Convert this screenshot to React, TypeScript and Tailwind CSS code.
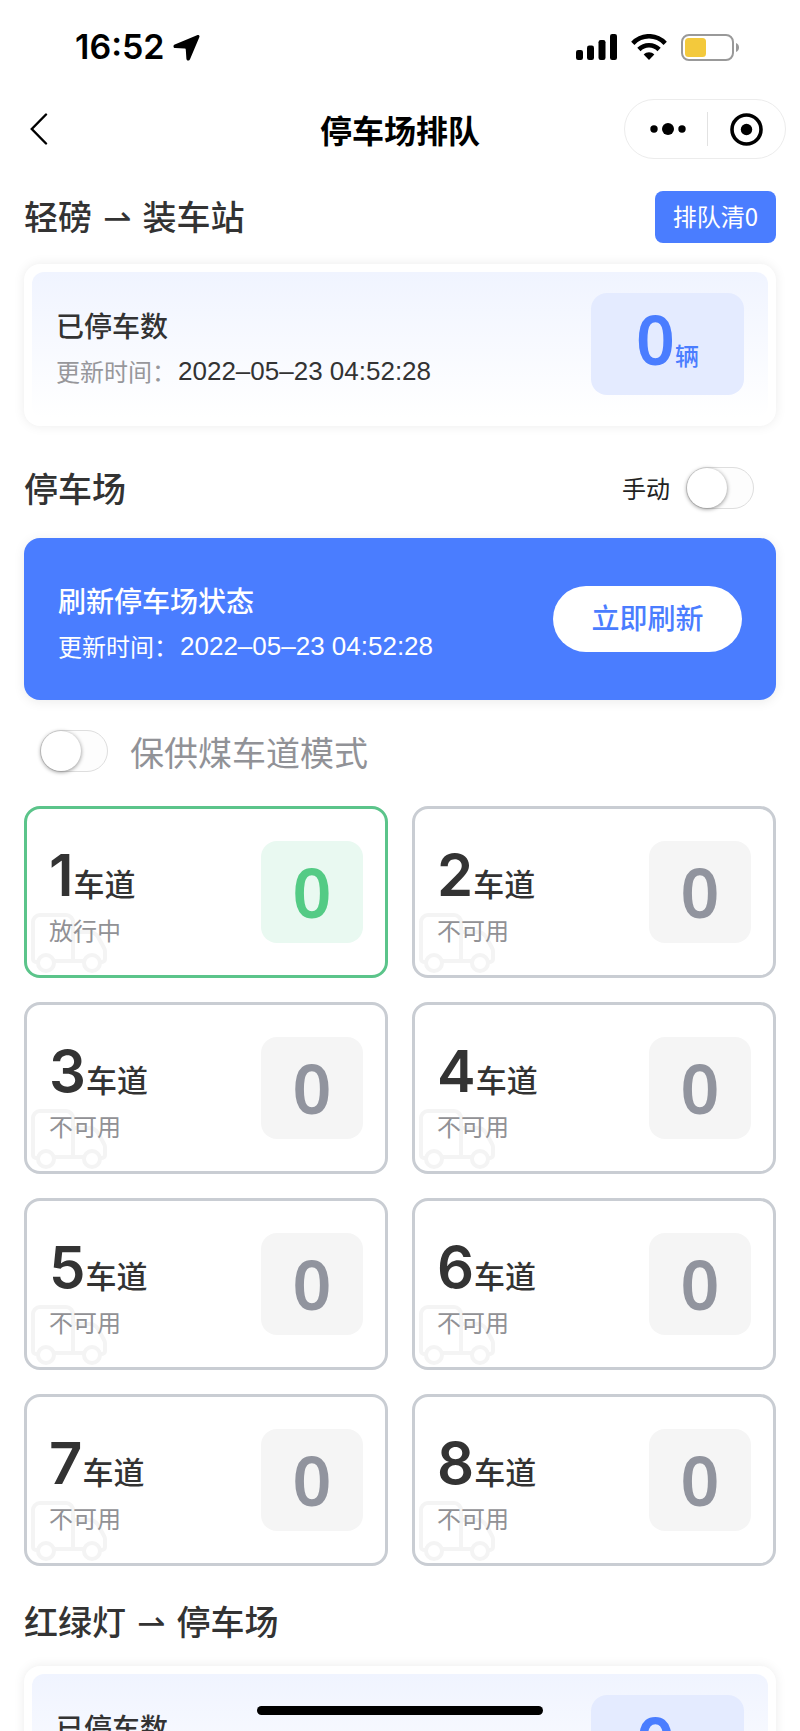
import { useState } from 'react';
import type { ReactNode } from 'react';

const UPDATED_AT = '2022–05–23 04:52:28';

const lanes = [
  { id: 1, status: '放行中', count: 0, open: true },
  { id: 2, status: '不可用', count: 0, open: false },
  { id: 3, status: '不可用', count: 0, open: false },
  { id: 4, status: '不可用', count: 0, open: false },
  { id: 5, status: '不可用', count: 0, open: false },
  { id: 6, status: '不可用', count: 0, open: false },
  { id: 7, status: '不可用', count: 0, open: false },
  { id: 8, status: '不可用', count: 0, open: false },
];

function StatusBar() {
  return (
    <div className="flex h-[94px] shrink-0 items-center justify-between pr-[60px] pl-[75px] text-black">
      <div className="flex items-center gap-2">
        <span className="font-['Inter',sans-serif] text-[34px] leading-none font-semibold">16:52</span>
        <svg className="h-[27px] w-[27px]" viewBox="0 0 27 27" fill="currentColor">
          <path d="M24 1.200 1.800 10.600c-2 .9-1.600 3.400.5 3.500l9.300.5c.8 0 1.100.4 1.200 1.100l.6 9c.2 2.200 2.800 2.600 3.600.6L26.300 3.300C27 1.500 25.700.4 24 1.200Z" />
        </svg>
      </div>
      <div className="flex items-center">
        <svg className="h-[26px] w-[41px]" viewBox="0 0 41 26" fill="currentColor">
          <rect x="0" y="16" width="7" height="10" rx="2.200" />
          <rect x="11" y="11.500" width="7" height="14.500" rx="2.200" />
          <rect x="22.500" y="6" width="7" height="20" rx="2.200" />
          <rect x="34" y="0" width="7" height="26" rx="2.200" />
        </svg>
        <svg className="ml-[14px] h-[26px] w-[36px]" viewBox="0 0 36 26" fill="none" stroke="currentColor" strokeWidth="4.600">
          <path d="M1.800 9.300C11-.1 25-.1 34.200 9.300" />
          <path d="M7.900 15.500c5.700-5.700 14.500-5.700 20.200 0" />
          <path d="M12.700 20.500c3-2.900 7.600-2.900 10.600 0L18 26Z" fill="currentColor" stroke="none" />
        </svg>
        <svg className="ml-[14px] h-[27px] w-[59px]" viewBox="0 0 59 27">
          <rect x="1" y="1" width="51" height="25" rx="7" fill="none" stroke="#999" strokeWidth="2" />
          <rect x="4" y="4" width="21" height="19" rx="3.500" fill="#f3c93c" />
          <path d="M55 9c4 1.500 4 7.500 0 9Z" fill="#999" />
        </svg>
      </div>
    </div>
  );
}

function NavBar() {
  return (
    <header className="grid h-[70px] shrink-0 grid-cols-[1fr_auto_1fr] items-center px-[14px] text-black">
      <button type="button" aria-label="返回" className="w-fit pl-4">
        <svg className="h-8 w-[18px]" viewBox="0 0 18 32" fill="none" stroke="currentColor" strokeWidth="2.400" strokeLinecap="round">
          <path d="M16 1.500 1.800 16 16 30.500" />
        </svg>
      </button>
      <h1 className="text-[32px] leading-10 font-bold">停车场排队</h1>
      <div className="flex h-[60px] w-[162px] items-center justify-self-end rounded-full border border-[#ececec] bg-white pl-1">
        <button type="button" aria-label="更多" className="flex flex-1 justify-center">
          <svg className="h-3 w-9" viewBox="0 0 36 12" fill="currentColor">
            <circle cx="4" cy="6" r="3.700" />
            <circle cx="18" cy="6" r="6" />
            <circle cx="32" cy="6" r="3.700" />
          </svg>
        </button>
        <span className="h-[34px] w-px bg-[#e2e2e2]" />
        <button type="button" aria-label="关闭" className="flex flex-1 justify-center">
          <svg className="h-[33px] w-[33px]" viewBox="0 0 33 33">
            <circle cx="16.500" cy="16.500" r="14.500" fill="none" stroke="currentColor" strokeWidth="3.600" />
            <circle cx="16.500" cy="16.500" r="5.700" fill="currentColor" />
          </svg>
        </button>
      </div>
    </header>
  );
}

function Heading({ children }: { children: ReactNode }) {
  return <h2 className="text-[34px] leading-10 font-medium text-[#333]">{children}</h2>;
}

function Arrow() {
  return <span className="mx-[11px] font-['DejaVu_Sans',sans-serif] font-normal">⇀</span>;
}

function Switch({ id }: { id: string }) {
  const [on, setOn] = useState(false);
  return (
    <input
      id={id}
      type="checkbox"
      role="switch"
      checked={on}
      onChange={(e) => setOn(e.target.checked)}
      className="h-[42px] w-[68px] shrink-0 appearance-none rounded-full border border-[#dedede] bg-[#fdfdfd] before:block before:h-[40px] before:w-[40px] before:rounded-full before:bg-white before:shadow-[0_1px_4px_rgba(0,0,0,0.45)] checked:bg-[#4a7dff] checked:before:translate-x-[26px]"
    />
  );
}

function UpdatedAt({ labelClass, valueClass }: { labelClass: string; valueClass: string }) {
  return (
    <p className="mt-2 flex items-center gap-0.5 leading-9">
      <span className={`text-2xl leading-9 ${labelClass}`}>更新时间：</span>
      <time className={`font-['Liberation_Sans',sans-serif] text-[26px] leading-9 ${valueClass}`}>{UPDATED_AT}</time>
    </p>
  );
}

function CountCard() {
  return (
    <section className="h-[162px] shrink-0 rounded-2xl bg-white p-2 shadow-[0_0_12px_rgba(0,0,0,0.08)]">
      <div className="flex h-full items-start justify-between rounded-xl bg-linear-to-b from-[#f0f4ff] to-white px-6 pt-[21px]">
        <div className="pt-3">
          <h3 className="text-[28px] leading-10 font-medium text-[#333]">已停车数</h3>
          <UpdatedAt labelClass="text-[#97979b]" valueClass="text-[#333]" />
        </div>
        <div className="flex h-[102px] w-[153px] items-baseline justify-center rounded-2xl bg-[#e4ebff] text-[#4a7dff]">
          <span className="font-['Noto_Sans',sans-serif] text-[68px] leading-[92px] font-semibold">0</span>
          <span className="text-2xl font-medium">辆</span>
        </div>
      </div>
    </section>
  );
}

function Truck() {
  return (
    <svg className="absolute bottom-0.5 left-1 h-[60px] w-[76px]" viewBox="0 0 76 60" fill="none" stroke="#f4f4f4" strokeWidth="4">
      <path d="M6 49H5a3 3 0 0 1-3-3V9a7 7 0 0 1 7-7h26a7 7 0 0 1 7 7v39M23 48h30" />
      <path d="M42 19h17c4 0 6 2 8 5l5 9c1 2 2 3 2 5v8a3 3 0 0 1-3 3h-2" />
      <circle cx="15" cy="50" r="8" />
      <circle cx="61" cy="50" r="8" />
    </svg>
  );
}

function LaneCard({ lane }: { lane: (typeof lanes)[number] }) {
  return (
    <li
      className={`relative flex h-[172px] items-center justify-between rounded-2xl border-[3px] px-[22px] ${
        lane.open ? 'border-[#5bc48a]' : 'border-[#c9cdd3]'
      }`}
    >
      <Truck />
      <div className="relative pt-2">
        <p className="flex items-baseline text-[#333]">
          <span className="font-['Inter',sans-serif] text-[58px] leading-[62px] font-semibold">{lane.id}</span>
          <span className="text-[31px] leading-10 font-medium">车道</span>
        </p>
        <p className="mt-1.5 text-2xl leading-9 text-[#919195]">{lane.status}</p>
      </div>
      <div
        className={`flex h-[102px] w-[102px] items-center justify-center rounded-2xl font-['Noto_Sans',sans-serif] text-[68px] leading-none font-semibold ${
          lane.open ? 'bg-[#e9f9f1] text-[#54cb85]' : 'bg-[#f5f5f5] text-[#91949e]'
        }`}
      >
        {lane.count}
      </div>
    </li>
  );
}

export default function App() {
  return (
    <div className="flex h-screen flex-col overflow-hidden bg-white font-['Noto_Sans_CJK_SC',sans-serif]">
      <StatusBar />
      <NavBar />
      <main className="flex min-h-0 flex-1 flex-col overflow-y-auto px-6 pt-[6px] [scrollbar-width:none]">
        <div className="flex h-[94px] shrink-0 items-center justify-between">
          <Heading>
            轻磅<Arrow />装车站
          </Heading>
          <button type="button" className="h-[52px] rounded-lg bg-[#4a7dff] px-[18px] pb-0.5 text-2xl text-white">
            排队清0
          </button>
        </div>
        <CountCard />

        <div className="mt-3 flex h-[100px] shrink-0 items-center justify-between pr-[22px]">
          <Heading>停车场</Heading>
          <div className="flex items-center gap-4">
            <label htmlFor="manual" className="text-2xl text-[#222]">手动</label>
            <Switch id="manual" />
          </div>
        </div>
        <section className="flex h-[162px] shrink-0 items-center justify-between rounded-2xl bg-[#4a7dff] px-[34px] text-white shadow-[0_2px_12px_rgba(0,0,0,0.08)]">
          <div className="pt-1.5">
            <h3 className="text-[28px] leading-10 font-medium">刷新停车场状态</h3>
            <UpdatedAt labelClass="" valueClass="" />
          </div>
          <button type="button" className="h-[66px] w-[189px] rounded-full bg-white pb-1 text-[28px] font-medium text-[#4a7dff]">
            立即刷新
          </button>
        </section>

        <div className="mb-1 flex h-[102px] shrink-0 items-center gap-[22px] pl-4">
          <Switch id="coal" />
          <label htmlFor="coal" className="text-[34px] text-[#919297]">保供煤车道模式</label>
        </div>
        <ul className="grid shrink-0 grid-cols-2 gap-6">
          {lanes.map((lane) => (
            <LaneCard key={lane.id} lane={lane} />
          ))}
        </ul>

        <div className="mt-3 flex h-[88px] shrink-0 items-center">
          <Heading>
            红绿灯<Arrow />停车场
          </Heading>
        </div>
        <CountCard />
      </main>
      <div className="fixed bottom-4 left-1/2 h-[9px] w-[286px] -translate-x-1/2 rounded-full bg-black" />
    </div>
  );
}
